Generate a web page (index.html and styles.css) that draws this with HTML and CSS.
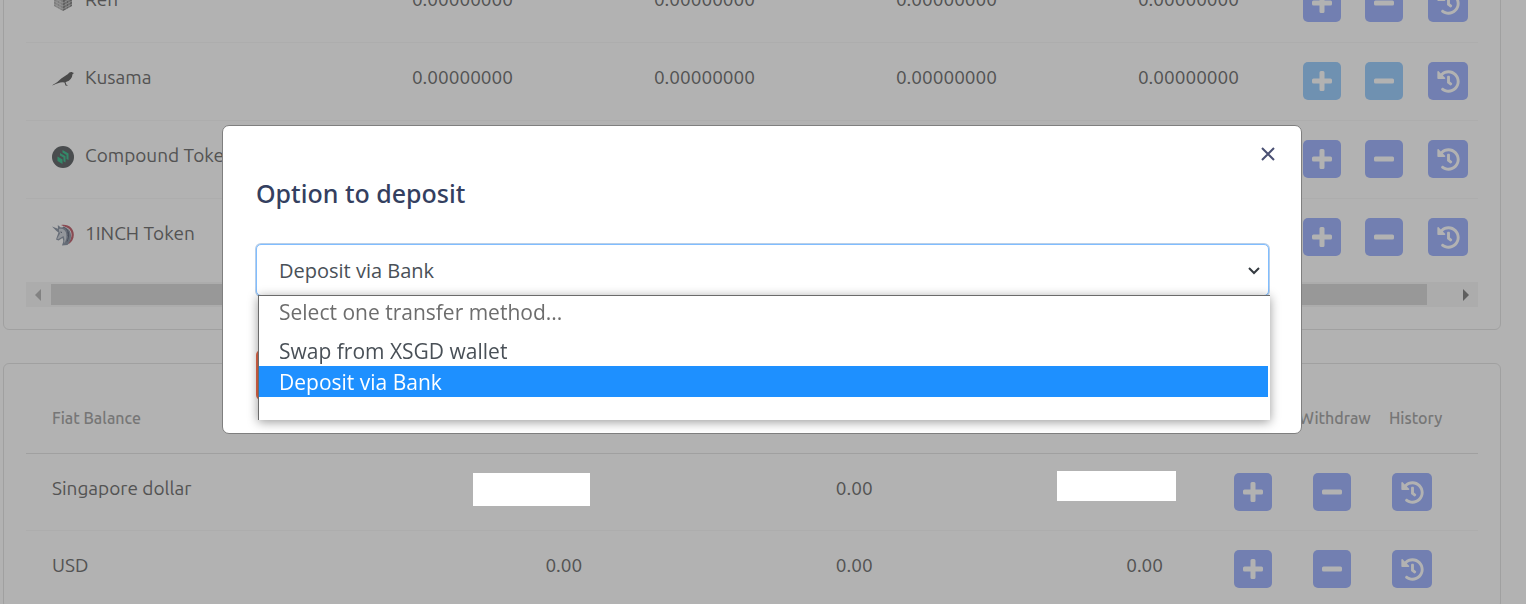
FILE: index.html
```html
<!DOCTYPE html>
<html lang="en">
  <head>
    <meta charset="utf-8">
    <meta name="viewport" content="width=device-width, initial-scale=1">
    <title>Wallet balances</title>
    <link rel="stylesheet" href="styles.css">
  </head>

  <body>
    <svg class="sprite" aria-hidden="true">
      <symbol id="plus" viewBox="0 0 20 20">
        <path d="M1.500 7.500h6v-6A1.500 1.500 0 0 1 9 0h2a1.500 1.500 0 0 1 1.500 1.500v6h6A1.500 1.500 0 0 1 20 9v2a1.500 1.500 0 0 1-1.500 1.500h-6v6A1.500 1.500 0 0 1 11 20H9a1.500 1.500 0 0 1-1.500-1.500v-6h-6A1.500 1.500 0 0 1 0 11V9a1.500 1.500 0 0 1 1.500-1.500z"/>
      </symbol>
      <symbol id="minus" viewBox="0 0 20 20">
        <rect x="0" y="7.500" width="20" height="5" rx="1.500"/>
      </symbol>
      <symbol id="history" viewBox="0 0 512 512">
        <path d="M504 255.531c.253 136.64-111.18 248.372-247.82 248.468-59.015.042-113.223-20.53-155.822-54.911-11.077-8.94-11.905-25.541-1.839-35.607l11.267-11.267c8.609-8.609 22.353-9.551 31.891-1.984C173.062 425.135 212.781 440 256 440c101.705 0 184-82.311 184-184 0-101.705-82.311-184-184-184-48.814 0-93.149 18.969-126.068 49.932l50.754 50.754c10.08 10.08 2.941 27.314-11.313 27.314H24c-8.837 0-16-7.163-16-16V38.627c0-14.254 17.234-21.393 27.314-11.314l49.372 49.372C129.209 34.136 189.552 8 256 8c136.81 0 247.747 110.78 248 247.531zm-180.912 78.784l9.823-12.63c8.138-10.463 6.253-25.542-4.21-33.679L288 256.349V152c0-13.255-10.745-24-24-24h-16c-13.255 0-24 10.745-24 24v135.651l65.409 50.874c10.463 8.137 25.541 6.253 33.679-4.21z"/>
      </symbol>
    </svg>

    <main class="page">
      <section class="card crypto">
        <table>
          <colgroup>
            <col>
            <col class="amount"><col class="amount"><col class="amount"><col class="amount">
            <col class="plus"><col class="minus"><col class="history">
          </colgroup>
          <tbody>
            <tr>
              <td>
                <div class="token">
                  <svg viewBox="0 0 22 22"><path fill="#c4c4c4" d="M11 0l9 5-9 5-9-5z"/><path fill="#b4b4b4" d="M2 5l9 5v11l-9-5z"/><path fill="#888" d="M20 5l-9 5v11l9-5z"/><path stroke="#e4e4e4" stroke-width=".6" fill="none" d="M2 8l9 5 9-5M2 11l9 5 9-5M2 14l9 5 9-5M5 7v11M8 8v11M14 8v11M17 7v11"/></svg>
                  <span>Ren</span>
                </div>
              </td>
              <td class="num">0.00000000</td>
              <td class="num">0.00000000</td>
              <td class="num">0.00000000</td>
              <td class="num">0.00000000</td>
              <td class="action"><button class="btn" aria-label="Deposit"><svg><use href="#plus"/></svg></button></td>
              <td class="action"><button class="btn" aria-label="Withdraw"><svg><use href="#minus"/></svg></button></td>
              <td class="action"><button class="btn wide" aria-label="History"><svg><use href="#history"/></svg></button></td>
            </tr>
            <tr>
              <td>
                <div class="token">
                  <svg viewBox="0 0 22 22"><path fill="#6a6a6a" d="M0 17.500c2-1.500 5-3 7-5 3-3 6-4.500 9-6.500 1-1.500 3-2.500 4.500-1.500L22 5l-1.500 1.200c-.3 4-2.500 6.300-6 7.500l-1 .5 1 2.500 1.500.8-1 .2-1.500-.2-1-3-2-.2c-3 0-6 1.500-9 2.700z"/></svg>
                  <span>Kusama</span>
                </div>
              </td>
              <td class="num">0.00000000</td>
              <td class="num">0.00000000</td>
              <td class="num">0.00000000</td>
              <td class="num">0.00000000</td>
              <td class="action"><button class="btn light" aria-label="Deposit"><svg><use href="#plus"/></svg></button></td>
              <td class="action"><button class="btn light" aria-label="Withdraw"><svg><use href="#minus"/></svg></button></td>
              <td class="action"><button class="btn wide" aria-label="History"><svg><use href="#history"/></svg></button></td>
            </tr>
            <tr>
              <td>
                <div class="token">
                  <svg viewBox="0 0 22 22"><circle cx="11" cy="11" r="11" fill="#696d70"/><g fill="#4ac597"><path d="M10.500 4l6 3.500v6.500l-2-1V9l-4-2.500z"/><path d="M8 7l5.500 3.200v6.300l-2-1.200v-3.800L8 9.500z"/><path d="M5.500 10.500l5 3v4.500l-5-3z"/></g></svg>
                  <span>Compound Token</span>
                </div>
              </td>
              <td class="num">0.00000000</td>
              <td class="num">0.00000000</td>
              <td class="num">0.00000000</td>
              <td class="num">0.00000000</td>
              <td class="action"><button class="btn" aria-label="Deposit"><svg><use href="#plus"/></svg></button></td>
              <td class="action"><button class="btn" aria-label="Withdraw"><svg><use href="#minus"/></svg></button></td>
              <td class="action"><button class="btn wide" aria-label="History"><svg><use href="#history"/></svg></button></td>
            </tr>
            <tr>
              <td>
                <div class="token">
                  <svg viewBox="0 0 22 22"><path fill="#c56a76" d="M9 1C16-.5 22 4 21.800 11c0 4-2 7-5 9l-1-1c5-5 5-12 0-15z"/><path fill="#939cab" d="M0 2.500l6 2.300L5.800 1l3 2.500c6-1.500 10.200 2.500 10.200 8 0 4-1 7-3.500 9.500L10 21.500c1-3 2-4 .5-7.500l-4 2.500-2.500-1 2.500-7-2-1.500z"/><path fill="#d3d7de" d="M7 5c3-1 6 .5 7 3.500 1 4 .5 8-2 11 .5-3 .5-5-.5-7.500L6 15.200l-.8-.8L8 9.500 7 7z"/><path stroke="#6b7386" fill="none" d="M11 3c4 1 6 5 5 9M8.500 8l1.500.5M16 8c1.500 4 0 7-1 9.500"/></svg>
                  <span>1INCH Token</span>
                </div>
              </td>
              <td class="num">0.00000000</td>
              <td class="num">0.00000000</td>
              <td class="num">0.00000000</td>
              <td class="num">0.00000000</td>
              <td class="action"><button class="btn" aria-label="Deposit"><svg><use href="#plus"/></svg></button></td>
              <td class="action"><button class="btn" aria-label="Withdraw"><svg><use href="#minus"/></svg></button></td>
              <td class="action"><button class="btn wide" aria-label="History"><svg><use href="#history"/></svg></button></td>
            </tr>
          </tbody>
        </table>
        <div class="scrollbar">
          <svg class="arrow" viewBox="0 0 25 25"><path fill="#bbb" d="M15 7v12l-6-6z"/></svg>
          <div class="track"><div class="thumb"></div></div>
          <svg class="arrow" viewBox="0 0 25 25"><path fill="#888" d="M10 7v12l6-6z"/></svg>
        </div>
      </section>

      <section class="card fiat">
        <table>
          <colgroup>
            <col>
            <col class="amount"><col class="amount"><col class="amount">
            <col class="plus"><col class="minus"><col class="history">
          </colgroup>
          <thead>
            <tr>
              <th>Fiat Balance</th>
              <th></th>
              <th></th>
              <th></th>
              <th></th>
              <th class="tight">Withdraw</th>
              <th class="tight">History</th>
            </tr>
          </thead>
          <tbody>
            <tr>
              <td>Singapore dollar</td>
              <td class="num masked"><span class="mask"></span></td>
              <td class="num">0.00</td>
              <td class="num masked"><span class="mask mask-total"></span></td>
              <td class="action"><button class="btn" aria-label="Deposit"><svg><use href="#plus"/></svg></button></td>
              <td class="action"><button class="btn" aria-label="Withdraw"><svg><use href="#minus"/></svg></button></td>
              <td class="action last"><button class="btn wide" aria-label="History"><svg><use href="#history"/></svg></button></td>
            </tr>
            <tr>
              <td>USD</td>
              <td class="num">0.00</td>
              <td class="num">0.00</td>
              <td class="num">0.00</td>
              <td class="action"><button class="btn" aria-label="Deposit"><svg><use href="#plus"/></svg></button></td>
              <td class="action"><button class="btn" aria-label="Withdraw"><svg><use href="#minus"/></svg></button></td>
              <td class="action last"><button class="btn wide" aria-label="History"><svg><use href="#history"/></svg></button></td>
            </tr>
          </tbody>
        </table>
      </section>
    </main>

    <div class="backdrop">
      <div class="modal" role="dialog" aria-labelledby="title">
        <button class="close" aria-label="Close"><svg viewBox="0 0 14 14"><path d="M1 1l12 12M13 1L1 13"/></svg></button>
        <h2 id="title"><label for="method">Option to deposit</label></h2>
        <div class="field">
          <select id="method">
            <option>Deposit via Bank</option>
          </select>
          <svg class="chevron" viewBox="0 0 12 8"><path d="M1 1l5 5 5-5"/></svg>
          <ul class="menu" role="listbox">
            <li class="placeholder">Select one transfer method...</li>
            <li>Swap from XSGD wallet</li>
            <li class="selected">Deposit via Bank</li>
          </ul>
        </div>
        <button class="submit" aria-label="Continue"></button>
      </div>
    </div>
  </body>
</html>
```

FILE: styles.css
```css
* {
  box-sizing: border-box;
}

body {
  margin: 0;
  height: 100vh;
  overflow: hidden;
  background-color: #fff;
  color: #777;
  font-family: Ubuntu, "Noto Sans", sans-serif;
  font-size: 19px;
  line-height: 28px;
}

.sprite {
  display: none;
}

.page {
  padding: 0 25px 0 3px;
}

/* balance tables */
.card {
  padding: 0 22px;
  border: 1px solid #e6e6e6;
  border-radius: 6px;
}

.crypto {
  margin-top: -36px;
  margin-bottom: 33px;
  padding-bottom: 22px;
}

table {
  width: 100%;
  table-layout: fixed;
  border-collapse: separate;
  border-spacing: 0;
}

.crypto .amount {
  width: 16.667%;
}

.crypto .plus {
  width: 89px;
}

.crypto .minus {
  width: 62px;
}

.crypto .history {
  width: 63px;
}

.fiat .amount {
  width: 20%;
}

.fiat .plus {
  width: 111px;
}

.fiat .minus {
  width: 90px;
}

.fiat .history {
  width: 89px;
}

th {
  height: 90px;
  padding: 43px 26px 24px;
  border-bottom: 1px solid #e6e6e6;
  color: #aaa;
  font-size: 16px;
  font-weight: 500;
  line-height: 22px;
  text-align: left;
  white-space: nowrap;
}

th.tight {
  padding-left: 0;
  padding-right: 0;
}

td {
  height: 77px;
  padding: 20px 25px 0 26px;
  border-bottom: 1px solid #f8f8f8;
  vertical-align: top;
  white-space: nowrap;
}

.crypto td {
  height: 78px;
}

.num {
  text-align: right;
}

td.action {
  padding: 19px 0 0;
}

.crypto td.action {
  padding-right: 12px;
  text-align: right;
}

.crypto td.action:last-child {
  padding-right: 10px;
}

.fiat td.action {
  padding-left: 46px;
}

.fiat td.action + td.action {
  padding-left: 14px;
}

.fiat td.action + td.last {
  padding-left: 3px;
}

.crypto tr:last-child td {
  border-bottom: none;
}

.token {
  display: flex;
  align-items: center;
  gap: 11px;
}

.token svg {
  width: 22px;
  height: 22px;
  margin-top: 4px;
}

.btn {
  display: inline-flex;
  align-items: center;
  justify-content: center;
  width: 38px;
  height: 38px;
  padding: 0;
  border: none;
  border-radius: 5px;
  background-color: #a4b7fe;
  vertical-align: top;
  cursor: pointer;
}

.btn svg {
  width: 20px;
  height: 20px;
  fill: #fff;
}

.btn.wide {
  width: 40px;
}

.btn.wide svg {
  width: 23px;
  height: 23px;
}

.btn.light {
  background-color: #a0d0fe;
}

.scrollbar {
  display: flex;
  height: 25px;
  margin-top: 5px;
  background-color: #f7f7f7;
}

.arrow {
  width: 25px;
  height: 25px;
}

.track {
  flex: 1;
  padding: 2px 26px 2px 0;
}

.thumb {
  height: 21px;
  background-color: #dadada;
}

.masked {
  position: relative;
}

.mask {
  position: absolute;
  z-index: 11;
  top: 19px;
  right: 17px;
  width: 117px;
  height: 33px;
  background-color: #fff;
}

.mask-total {
  top: 17px;
  right: 12px;
  width: 119px;
  height: 30px;
}

/* deposit dialog */
.backdrop {
  position: fixed;
  z-index: 10;
  inset: 0;
  padding: 125px 224px 0 222px;
  background-color: rgba(0, 0, 0, 0.3);
  font-family: "Segoe UI", "Open Sans", sans-serif;
}

.modal {
  display: flex;
  flex-direction: column;
  align-items: flex-start;
  padding: 21px 32px 33px 33px;
  border: 1px solid #7f7f7f;
  border-radius: 7px;
  background-color: #fff;
}

.close {
  align-self: flex-end;
  width: 14px;
  height: 14px;
  margin-right: -6px;
  padding: 0;
  border: none;
  background: none;
}

.close svg,
.chevron {
  display: block;
  fill: none;
  stroke: #4a5073;
  stroke-width: 2;
}

.modal h2 {
  margin: 14px 0 33px;
  color: #343f60;
  font-family: "Segoe UI", "Noto Sans", sans-serif;
  font-size: 25px;
  font-weight: 500;
  line-height: 36px;
}

.field {
  position: relative;
  width: 100%;
}

.field select {
  display: block;
  width: 100%;
  height: 52px;
  padding: 1px 22px 0;
  appearance: none;
  border: 1px solid #80bdff;
  border-radius: 5px;
  outline: none;
  background-color: #fff;
  box-shadow: 0 0 0 1px #b9cfe8;
  color: #495057;
  font-family: inherit;
  font-size: 20px;
}

.chevron {
  position: absolute;
  top: 23px;
  right: 9px;
  width: 12px;
  height: 8px;
  stroke: #343a40;
}

.menu {
  position: absolute;
  top: 51px;
  left: 2px;
  right: -1px;
  height: 125px;
  margin: 0;
  padding: 0;
  border-top: 1px solid #6b6b6b;
  border-left: 1px solid #6b6b6b;
  background-color: #fff;
  box-shadow: 0 2px 10px rgba(0, 0, 0, 0.4);
  color: #495057;
  font-size: 21px;
  line-height: 30px;
  list-style: none;
}

.menu li {
  padding-top: 1px;
  padding-left: 20px;
}

.menu .placeholder {
  margin-bottom: 8px;
  color: #6d6d6d;
}

.menu .selected {
  margin-right: 2px;
  background-color: #1e90ff;
  color: #fff;
}

.submit {
  width: 120px;
  height: 50px;
  margin-top: 54px;
  border: none;
  border-radius: 5px;
  background-color: #e5694b;
}
```
